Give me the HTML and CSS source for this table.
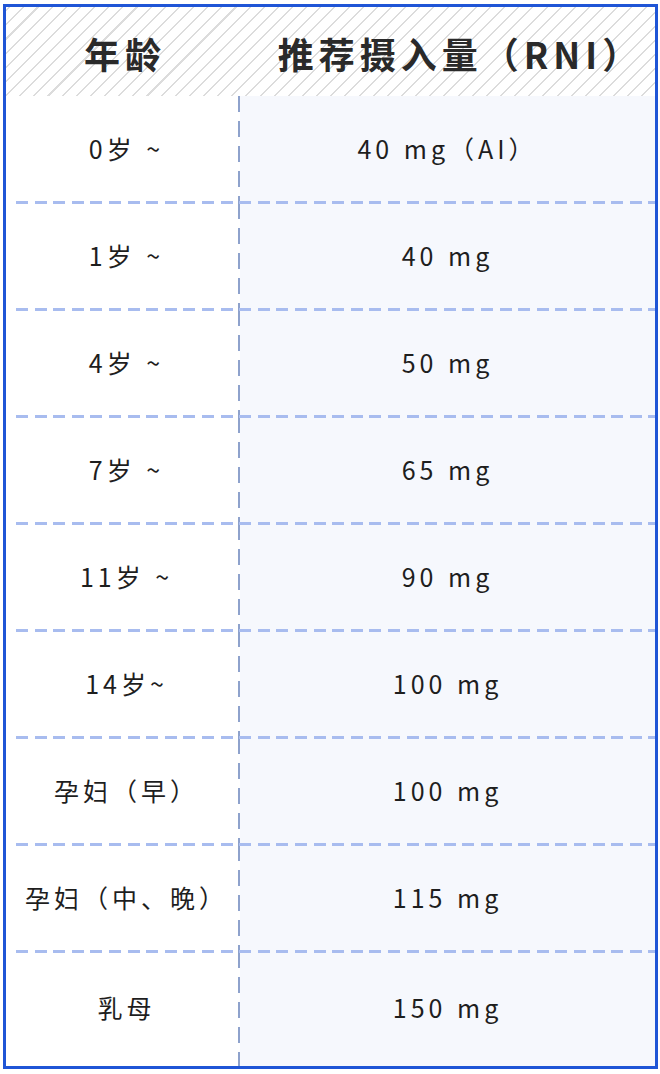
FILE: index.html
```html
<!DOCTYPE html>
<html lang="zh">
<head>
<meta charset="utf-8">
<link rel="stylesheet" href="styles.css">
</head>
<body>
<div class="page">
  <div class="table">
    <div class="head">
      <div class="hcell left">年龄</div>
      <div class="hcell right">推荐摄入量（RNI）</div>
    </div>
    <div class="row"><div class="cell left">0岁 ~</div><div class="cell right">40 mg（AI）</div></div>
    <div class="row"><div class="cell left">1岁 ~</div><div class="cell right">40 mg</div></div>
    <div class="row"><div class="cell left">4岁 ~</div><div class="cell right">50 mg</div></div>
    <div class="row"><div class="cell left">7岁 ~</div><div class="cell right">65 mg</div></div>
    <div class="row"><div class="cell left">11岁 ~</div><div class="cell right">90 mg</div></div>
    <div class="row"><div class="cell left">14岁~</div><div class="cell right">100 mg</div></div>
    <div class="row"><div class="cell left">孕妇（早）</div><div class="cell right">100 mg</div></div>
    <div class="row"><div class="cell left">孕妇（中、晚）</div><div class="cell right">115 mg</div></div>
    <div class="row last"><div class="cell left">乳母</div><div class="cell right">150 mg</div></div>
  </div>
</div>
</body>
</html>
```

FILE: styles.css
```css
html, body {
  margin: 0;
  padding: 0;
  background: #ffffff;
}

.page {
  padding: 4px 2px 5px 3px;
}

.table {
  width: 649px;
  border: 3px solid #1f55d6;
  font-family: "Noto Sans CJK SC", "Noto Sans", sans-serif;
  color: #2e2e2e;
}

.head {
  display: grid;
  grid-template-columns: 234px 1fr;
  height: 89px;
  background-color: #ffffff;
  background-image: repeating-linear-gradient(
    -45deg,
    #ffffff 0px,
    #ffffff 8.5px,
    #dcdcdc 8.5px,
    #dcdcdc 10px
  );
}

.hcell {
  display: flex;
  align-items: center;
  justify-content: center;
  font-size: 36px;
  font-weight: 700;
  letter-spacing: 5px;
  color: #2a2a2a;
  padding-top: 2px;
}

.hcell.left {
  padding-left: 4px;
}

.hcell.right {
  padding-left: 26px;
}

.row {
  display: grid;
  grid-template-columns: 234px 1fr;
  height: 107px;
  position: relative;
}

.row.last {
  height: 114px;
}

.row::after {
  content: "";
  position: absolute;
  left: 10px;
  right: 0;
  bottom: -1px;
  height: 3px;
  background-image: repeating-linear-gradient(
    90deg,
    #a8bcef 0px,
    #a8bcef 12px,
    transparent 12px,
    transparent 18.6px
  );
  z-index: 2;
}

.row.last::after {
  display: none;
}

.cell {
  display: flex;
  align-items: center;
  justify-content: center;
  font-size: 25px;
  font-weight: 400;
  letter-spacing: 4px;
  word-spacing: 1px;
  color: #1e1e1e;
}

.cell.left {
  background-color: #ffffff;
  background-image: repeating-linear-gradient(
    180deg,
    #8ea2cc 0px,
    #8ea2cc 16px,
    transparent 16px,
    transparent 25px
  );
  background-size: 2px 100%;
  background-repeat: no-repeat;
  background-position: right top;
  padding-bottom: 4px;
  padding-left: 7px;
}

.cell.right {
  background: #f6f8fd;
  padding-bottom: 4px;
}
```
